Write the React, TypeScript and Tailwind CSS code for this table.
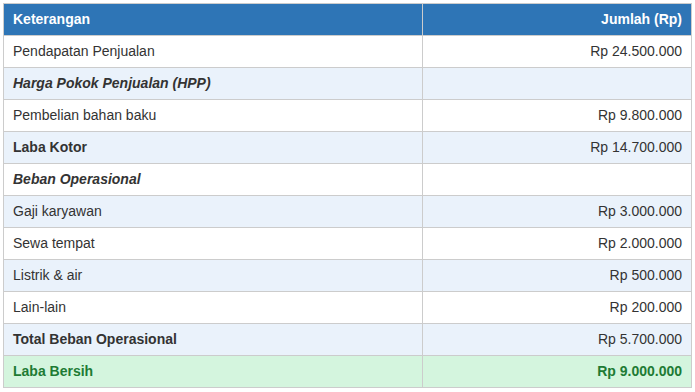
import React from 'react'

type Row = {
  label: string
  amount?: string
  kind?: 'section' | 'bold' | 'net'
}

const rows: Row[] = [
  { label: 'Pendapatan Penjualan', amount: 'Rp 24.500.000' },
  { label: 'Harga Pokok Penjualan (HPP)', kind: 'section' },
  { label: 'Pembelian bahan baku', amount: 'Rp 9.800.000' },
  { label: 'Laba Kotor', amount: 'Rp 14.700.000', kind: 'bold' },
  { label: 'Beban Operasional', kind: 'section' },
  { label: 'Gaji karyawan', amount: 'Rp 3.000.000' },
  { label: 'Sewa tempat', amount: 'Rp 2.000.000' },
  { label: 'Listrik & air', amount: 'Rp 500.000' },
  { label: 'Lain-lain', amount: 'Rp 200.000' },
  { label: 'Total Beban Operasional', amount: 'Rp 5.700.000', kind: 'bold' },
  { label: 'Laba Bersih', amount: 'Rp 9.000.000', kind: 'net' },
]

export default function App() {
  return (
    <div className="bg-white p-[3px] font-['Liberation_Sans',Arial,sans-serif] text-[14px] text-[#333]">
      <table className="w-[689px] border-collapse">
        <thead>
          <tr className="bg-[#2e75b6] text-white">
            <th className="border border-[#ccc] px-[9px] py-[8px] text-left font-bold leading-[15px]">
              Keterangan
            </th>
            <th className="w-[269px] border border-[#ccc] px-[9px] py-[8px] text-right font-bold leading-[15px]">
              Jumlah (Rp)
            </th>
          </tr>
        </thead>
        <tbody>
          {rows.map((r, i) => {
            // striping: every second row light blue, last row green
            const bg =
              r.kind === 'net' ? 'bg-[#d4f5de]' : i % 2 === 1 ? 'bg-[#eaf2fb]' : 'bg-white'
            const labelCls =
              r.kind === 'section'
                ? 'font-bold italic'
                : r.kind === 'bold'
                  ? 'font-bold'
                  : r.kind === 'net'
                    ? 'font-bold text-[#1e7b34]'
                    : ''
            return (
              <tr key={r.label} className={bg}>
                <td className={`border border-[#ccc] px-[9px] py-[8px] leading-[15px] ${labelCls}`}>
                  {r.label}
                </td>
                <td
                  className={`border border-[#ccc] px-[9px] py-[8px] text-right leading-[15px] ${
                    r.kind === 'net' ? 'font-bold text-[#1e7b34]' : ''
                  }`}
                >
                  {r.amount ?? ''}
                </td>
              </tr>
            )
          })}
        </tbody>
      </table>
    </div>
  )
}
